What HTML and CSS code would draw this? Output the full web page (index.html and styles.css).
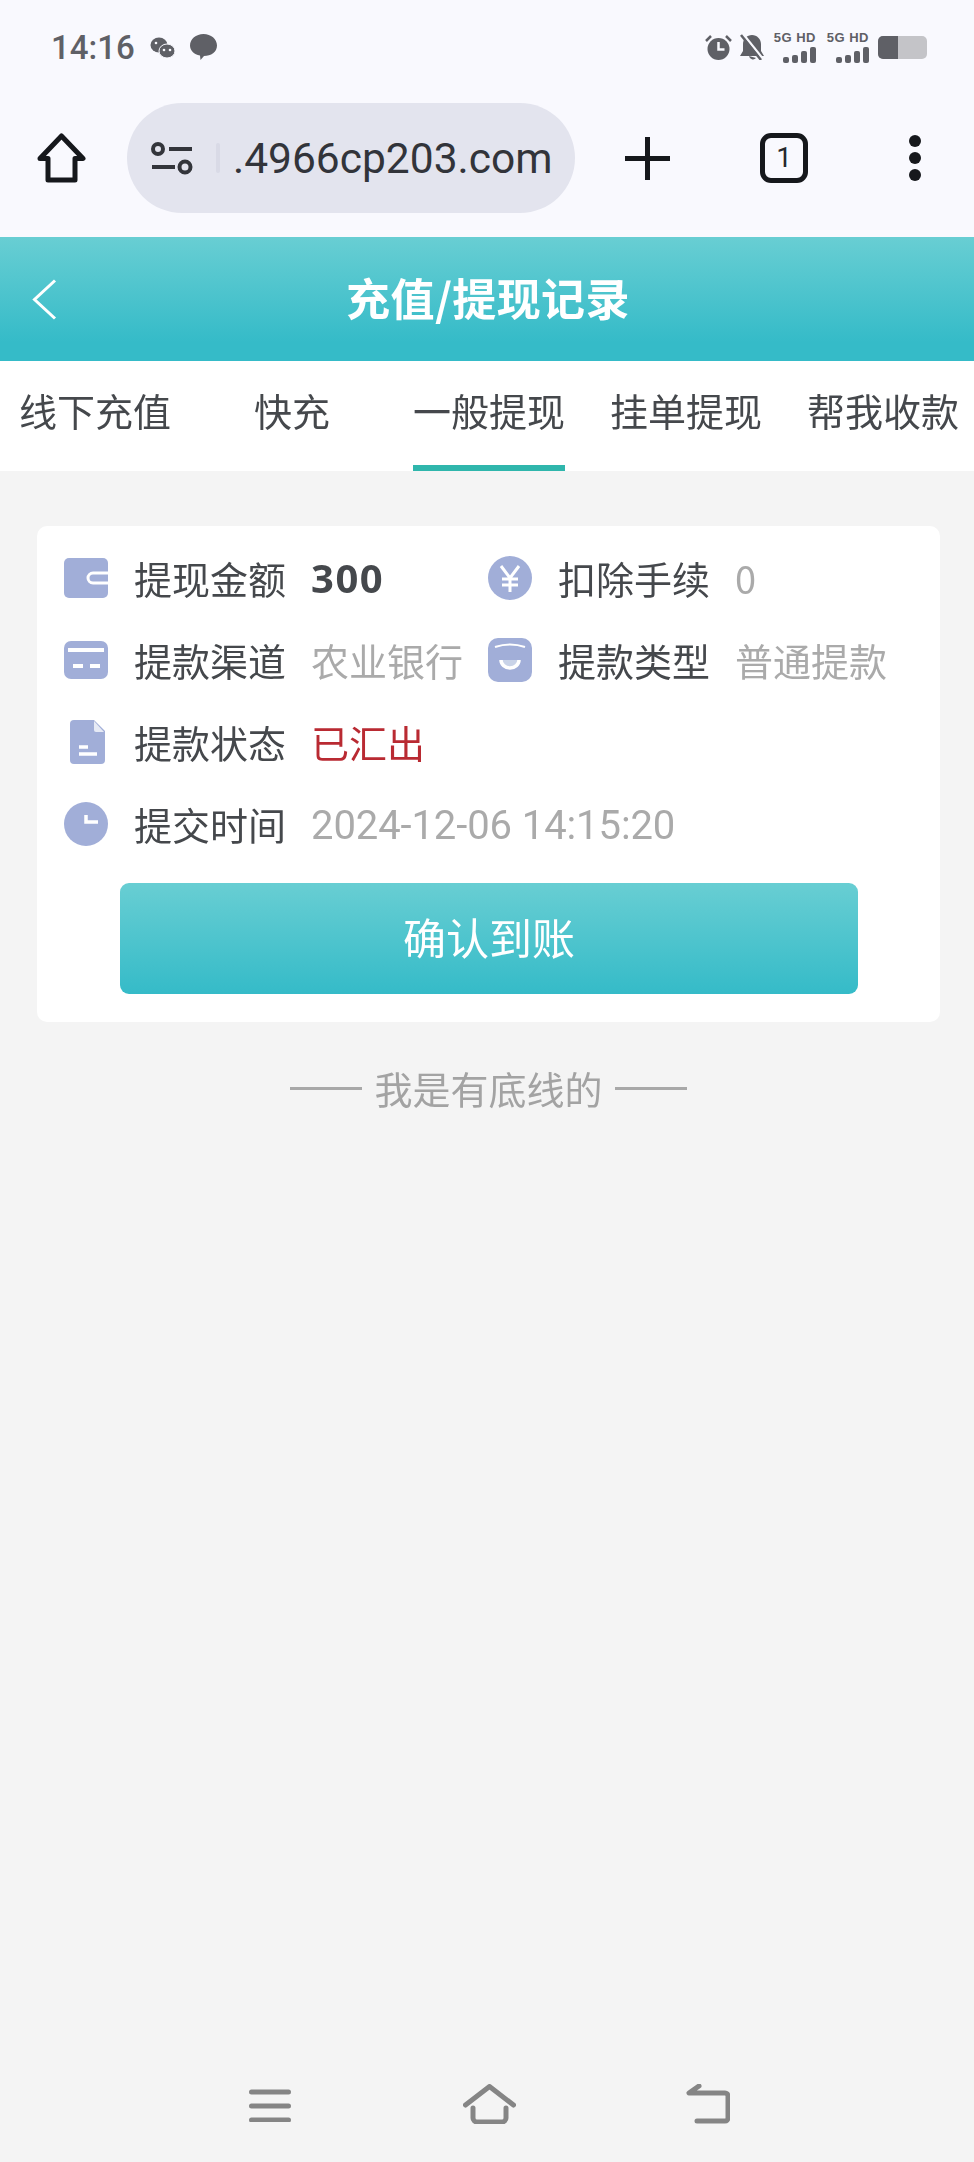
FILE: index.html
```html
<!DOCTYPE html>
<html lang="zh-CN">
<head>
  <meta charset="UTF-8">
  <meta name="viewport" content="width=device-width, initial-scale=1.0">
  <title>充值/提现记录</title>
  <link rel="stylesheet" href="styles.css">
</head>
<body>
  <div class="page">
    <!-- phone status bar -->
    <div class="status-bar">
      <span class="clock">14:16</span>
      <svg class="st-wechat" width="25" height="21" viewBox="0 0 25 21"><ellipse cx="9" cy="8" rx="8.500" ry="7.500"/><ellipse cx="17" cy="14" rx="8" ry="7" stroke="#f9f9fe" stroke-width="1"/><circle cx="6" cy="6" r="1.300" fill="#f9f9fe"/><circle cx="14" cy="13" r="1.300" fill="#f9f9fe"/><circle cx="20" cy="13" r="1.300" fill="#f9f9fe"/></svg>
      <svg class="st-bubble" width="27" height="26" viewBox="0 0 27 26"><path d="M13.500 0C21 0 27 5 27 11.500S21 22 14 22l-3.500 4-.5-4.500C4 20.500 0 16.500 0 11.500 0 5 6 0 13.500 0z"/></svg>
      <div class="status-right">
        <svg width="27" height="26" viewBox="0 0 27 26"><circle cx="13.500" cy="15" r="11"/><path d="M1 7l5-5M26 7l-5-5" fill="none" stroke="#5f6066" stroke-width="2.500"/><path d="M13.500 8v7.500h6" fill="none" stroke="#f9f9fe" stroke-width="2.500"/></svg>
        <svg class="st-bell" width="24" height="26" viewBox="0 0 24 26"><path d="M12 1c5 0 9 4 9 9v7l3 5H0l3-5v-7c0-5 4-9 9-9z"/><path d="M9 22a4 4 0 0 0 7 2z"/><path d="M3 0l20 25" stroke="#f9f9fe" stroke-width="2.500"/><path d="M1 1l20 25" stroke="#5f6066" stroke-width="2.500"/></svg>
        <div class="sim">
          <span class="sim-text">5G HD</span>
          <div class="bars"><i class="b1"></i><i class="b2"></i><i class="b3"></i><i class="b4"></i></div>
        </div>
        <div class="sim">
          <span class="sim-text">5G HD</span>
          <div class="bars"><i class="b1"></i><i class="b2"></i><i class="b3"></i><i class="b4"></i></div>
        </div>
        <div class="battery"><div class="battery-level"></div></div>
      </div>
    </div>

    <!-- browser toolbar -->
    <div class="toolbar">
      <svg class="tb-home" width="49" height="50" viewBox="0 0 49 50"><path d="M24.500 3L46 25.500H38V47H11V25.500H3z" fill="none" stroke="#16181c" stroke-width="5" stroke-linejoin="round"/></svg>
      <div class="url-pill">
        <svg width="42" height="33" viewBox="0 0 42 33"><g fill="none" stroke="#33353b" stroke-width="4"><circle cx="7" cy="7" r="5"/><path d="M18 7h23M1 25h23"/><circle cx="34" cy="25" r="5.500"/></g></svg>
        <span class="url-fade"></span>
        <span class="url-text">.4966cp203.com</span>
      </div>
      <svg class="tb-plus" width="45" height="43" viewBox="0 0 45 43"><path d="M22.500 0v43M0 21.500h45" stroke="#16181c" stroke-width="5"/></svg>
      <div class="tab-count">1</div>
      <div class="tb-dots"><i></i><i></i><i></i></div>
    </div>

    <!-- page header -->
    <header class="header">
      <svg class="back" width="25" height="41" viewBox="0 0 25 41"><path d="M23 1.500L2.500 20.500 23 39.500" fill="none" stroke="#fff" stroke-width="3"/></svg>
      <h1>充值/提现记录</h1>
    </header>

    <nav class="tabs">
      <a class="tab">线下充值</a>
      <a class="tab">快充</a>
      <a class="tab active">一般提现</a>
      <a class="tab">挂单提现</a>
      <a class="tab">帮我收款</a>
    </nav>

    <main class="content">
      <div class="card">
        <div class="row">
          <div class="cell">
            <svg class="ico" width="44" height="40" viewBox="0 0 44 40"><rect width="44" height="40" rx="5"/><path d="M44 15H29a4.500 4.500 0 0 0 0 10h15" fill="none" stroke="#fff" stroke-width="3"/></svg>
            <span class="label">提现金额</span>
            <span class="value amount">300</span>
          </div>
          <div class="cell">
            <svg class="ico" width="44" height="44" viewBox="0 0 44 44"><circle cx="22" cy="22" r="22"/><path d="M13 10l9 12 9-12M22 22v14M14 23h16M14 29h16" fill="none" stroke="#fff" stroke-width="3"/></svg>
            <span class="label">扣除手续</span>
            <span class="value">0</span>
          </div>
        </div>
        <div class="row">
          <div class="cell">
            <svg class="ico" width="44" height="38" viewBox="0 0 44 38"><rect width="44" height="38" rx="7"/><path d="M4 9h36" stroke="#fff" stroke-width="4"/><path d="M9 25h10M26 25h10" stroke="#fff" stroke-width="4"/></svg>
            <span class="label">提款渠道</span>
            <span class="value">农业银行</span>
          </div>
          <div class="cell">
            <svg class="ico" width="44" height="44" viewBox="0 0 44 44"><rect width="44" height="44" rx="10"/><path d="M7 9q15-5 30 0" fill="none" stroke="#fff" stroke-width="2"/><path d="M13 22a9 8 0 0 0 18 0" fill="#c9d3e8" stroke="#fff" stroke-width="3.500"/></svg>
            <span class="label">提款类型</span>
            <span class="value">普通提款</span>
          </div>
        </div>
        <div class="row">
          <div class="cell">
            <svg class="ico" width="44" height="44" viewBox="0 0 44 44"><path d="M10 0h20l11 11v29a4 4 0 0 1-4 4H10a4 4 0 0 1-4-4V4a4 4 0 0 1 4-4z"/><path d="M30 1l10 11H32a2 2 0 0 1-2-2z" fill="#e6eaf5"/><path d="M15 27h9M15 34h18" stroke="#fff" stroke-width="3.500"/></svg>
            <span class="label">提款状态</span>
            <span class="value status">已汇出</span>
          </div>
        </div>
        <div class="row">
          <div class="cell">
            <svg class="ico" width="44" height="44" viewBox="0 0 44 44"><circle cx="22" cy="22" r="22"/><path d="M22 13v7h12" fill="none" stroke="#fff" stroke-width="3.500"/></svg>
            <span class="label">提交时间</span>
            <span class="value date">2024-12-06 14:15:20</span>
          </div>
        </div>
        <button class="confirm">确认到账</button>
      </div>
      <div class="end-line">我是有底线的</div>
    </main>

    <!-- phone navigation -->
    <div class="nav-bar">
      <svg width="42" height="38" viewBox="0 0 42 38"><path d="M2.500 8h37M2.500 22h37M2.500 36h37" stroke="#858585" stroke-width="5" stroke-linecap="round"/></svg>
      <svg class="nav-home" width="53" height="40" viewBox="0 0 53 40"><path d="M2.500 21L26.500 2.500l24 18.500M10 24v10a4 4 0 0 0 4 4h25a4 4 0 0 0 4-4V24" fill="none" stroke="#858585" stroke-width="5" stroke-linecap="round" stroke-linejoin="round"/></svg>
      <svg class="nav-back" width="44" height="40" viewBox="0 0 44 40"><path d="M13 2L3 9h36a3 3 0 0 1 3 3v22a3 3 0 0 1-3 3H11" fill="none" stroke="#858585" stroke-width="5" stroke-linecap="round" stroke-linejoin="round"/></svg>
    </div>
  </div>
</body>
</html>
```

FILE: styles.css
```css
:root {
  --teal-top: #68ced3;
  --teal-bottom: #35bbc8;
  --icon-color: #a1aed8;
  --text-color: #45484c;
  --muted: #aaaaaa;
  --chrome: #f9f9fe;
}

* {
  box-sizing: border-box;
}

body {
  margin: 0;
  font-family: "Noto Sans CJK SC", "Noto Sans", sans-serif;
  background: #f4f4f4;
  color: var(--text-color);
}

/* the reference is a soft, compressed photo of a phone */
.page {
  min-height: 2162px;
  display: flex;
  flex-direction: column;
  filter: blur(0.6px);
}

/* status bar */
.status-bar {
  height: 94px;
  padding: 0 47px 0 51px;
  background: var(--chrome);
  display: flex;
  align-items: center;
  color: #5f6066;
  fill: #5f6066;
}

.clock {
  font-family: "Roboto", sans-serif;
  font-size: 33px;
  font-weight: 500;
}

.st-wechat {
  margin-left: 15px;
}

.st-bubble {
  margin-left: 15px;
}

.status-right {
  margin-left: auto;
  display: flex;
  align-items: center;
}

.st-bell {
  margin-left: 8px;
}

.sim {
  width: 44px;
  margin-left: 8px;
  display: flex;
  flex-direction: column;
  align-items: flex-end;
}

.sim + .sim {
  margin-left: 9px;
}

.sim-text {
  font-family: "Liberation Sans", sans-serif;
  font-size: 13px;
  line-height: 12px;
  font-weight: 700;
  letter-spacing: 0.5px;
  white-space: nowrap;
}

.bars {
  height: 17px;
  margin-top: 2px;
  display: flex;
  align-items: flex-end;
  gap: 3px;
}

.bars i {
  width: 6px;
  background: #5f6066;
  border-radius: 2px;
}

.b1 { height: 6px; }
.b2 { height: 8px; }
.b3 { height: 12px; }
.b4 { height: 16px; }

.battery {
  width: 49px;
  height: 23px;
  margin-left: 9px;
  background: #c4c4c8;
  border-radius: 5px;
  overflow: hidden;
}

.battery-level {
  width: 20px;
  height: 100%;
  background: #5f6066;
}

/* browser toolbar */
.toolbar {
  height: 143px;
  padding-left: 37px;
  padding-bottom: 15px;
  background: var(--chrome);
  display: flex;
  align-items: center;
}

.url-pill {
  width: 448px;
  height: 110px;
  margin-left: 41px;
  padding-left: 24px;
  border-radius: 55px;
  background: #e3e4ee;
  display: flex;
  align-items: center;
  overflow: hidden;
}

.url-fade {
  width: 4px;
  height: 30px;
  margin-left: 23px;
  border-radius: 2px;
  background: #d9dae6;
}

.url-text {
  margin-left: 13px;
  font-family: "Roboto", sans-serif;
  font-size: 42.5px;
  color: #32343a;
  white-space: nowrap;
}

.tb-plus {
  margin-left: 50px;
}

.tab-count {
  width: 48px;
  height: 50px;
  margin-left: 90px;
  border: 5px solid #16181c;
  border-radius: 11px;
  font-family: "Roboto", sans-serif;
  font-size: 28px;
  line-height: 40px;
  text-align: center;
  color: #26282c;
}

.tb-dots {
  margin-left: 101px;
  display: flex;
  flex-direction: column;
  gap: 5px;
}

.tb-dots i {
  width: 12px;
  height: 12px;
  border-radius: 50%;
  background: #16181c;
}

/* header */
.header {
  height: 124px;
  padding-left: 32px;
  background: linear-gradient(#68ced3, #35bbc8 85%);
  display: grid;
  grid-template-columns: 1fr auto 1fr;
  align-items: center;
  color: #fff;
}

.header h1 {
  grid-column: 2;
  grid-row: 1;
  margin: 0 30px 5px 0;
  font-size: 44px;
  font-weight: 700;
  letter-spacing: 0.4px;
}

.back {
  grid-column: 1;
  grid-row: 1;
}

/* tabs */
.tabs {
  height: 110px;
  padding-left: 19px;
  background: #fff;
  display: grid;
  grid-template-columns: repeat(5, 152px);
  column-gap: 45px;
}

.tab {
  font-size: 38px;
  line-height: 98px;
  text-align: center;
  white-space: nowrap;
  color: var(--text-color);
}

.tab.active {
  border-bottom: 6px solid #2fb6ac;
}

/* record card */
.content {
  padding: 55px 34px 0 37px;
}

.card {
  padding: 11px 0 28px 27px;
  background: #fff;
  border-radius: 10px;
}

.row {
  height: 82px;
  display: grid;
  grid-template-columns: 424px 1fr;
}

.cell {
  display: flex;
  align-items: center;
  white-space: nowrap;
}

.ico {
  flex: none;
  margin-right: 26px;
  fill: var(--icon-color);
}

.label {
  width: 152px;
  padding-bottom: 2px;
  font-size: 38px;
}

.value {
  margin-left: 25px;
  padding-bottom: 2px;
  font-size: 38px;
  color: var(--muted);
}

.amount {
  font-family: "Noto Sans", sans-serif;
  font-size: 40px;
  font-weight: 700;
  letter-spacing: 1.5px;
  color: var(--text-color);
}

.status {
  color: #b92a32;
}

.date {
  margin-top: 2px;
  padding-bottom: 0;
  font-family: "Roboto", sans-serif;
  font-size: 40px;
  letter-spacing: -0.1px;
}

.confirm {
  display: block;
  width: 738px;
  height: 111px;
  margin: 18px 0 0 56px;
  padding-bottom: 7px;
  border: none;
  border-radius: 9px;
  background: linear-gradient(var(--teal-top), var(--teal-bottom));
  font-family: inherit;
  font-size: 43px;
  color: #fff;
}

.end-line {
  height: 50px;
  margin-top: 40px;
  display: flex;
  justify-content: center;
  align-items: center;
  gap: 12px;
  font-size: 38px;
  color: #a3a3a3;
}

.end-line::before,
.end-line::after {
  content: "";
  width: 72px;
  height: 3px;
  margin-top: 2px;
  background: #a8a8a8;
}

/* phone nav */
.nav-bar {
  margin-top: auto;
  padding: 0 0 38px 249px;
  display: flex;
  align-items: flex-start;
}

.nav-home {
  margin-left: 172px;
}

.nav-back {
  margin-left: 170px;
}
```
